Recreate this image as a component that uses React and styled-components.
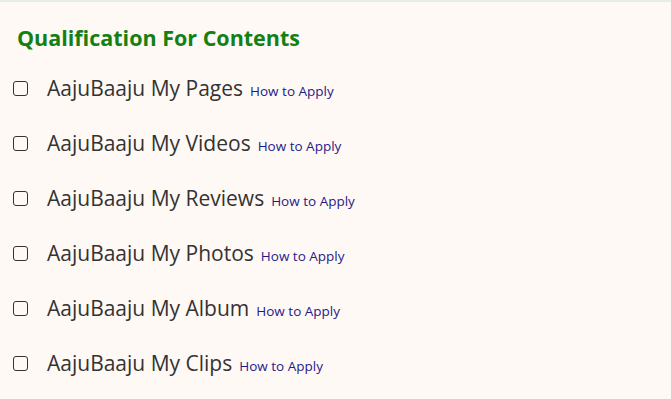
import React from "react";
import styled, { createGlobalStyle } from "styled-components";

const Global = createGlobalStyle`
  html, body { margin: 0; padding: 0; background: #fff9f5; }
  body { font-family: "Open Sans", "Noto Sans", sans-serif; }
`;

const Page = styled.div`
  border-top: 2px solid #e4eee4;
  min-height: 397px;
  background: #fff9f5;
  padding: 22px 0 0 13px;
  box-sizing: border-box;
`;

const Title = styled.h2`
  margin: 0 0 0 4px;
  font-size: 21.5px;
  font-weight: 700;
  color: #138013;
  line-height: 28px;
`;

const List = styled.ul`
  list-style: none;
  margin: 22px 0 0;
  padding: 0;
  display: flex;
  flex-direction: column;
  gap: 27px;
`;

const Row = styled.li`
  display: flex;
  align-items: baseline;
  height: 28px;
`;

const Box = styled.span`
  display: inline-block;
  width: 13px;
  height: 13px;
  border: 1.5px solid #333;
  border-radius: 3px;
  margin-right: 19px;
  align-self: center;
`;

const Label = styled.span`
  font-size: 21px;
  color: #333;
  line-height: 28px;
`;

const Link = styled.a`
  font-size: 13.5px;
  color: #1f1a8a;
  margin-left: 7px;
  text-decoration: none;
`;

const items = ["Pages", "Videos", "Reviews", "Photos", "Album", "Clips"];

export default function App() {
  return (
    <>
      <Global />
      <Page>
        <Title>Qualification For Contents</Title>
        <List>
          {items.map((it) => (
            <Row key={it}>
              <Box />
              <Label>AajuBaaju My {it}</Label>
              <Link href="#">How to Apply</Link>
            </Row>
          ))}
        </List>
      </Page>
    </>
  );
}
